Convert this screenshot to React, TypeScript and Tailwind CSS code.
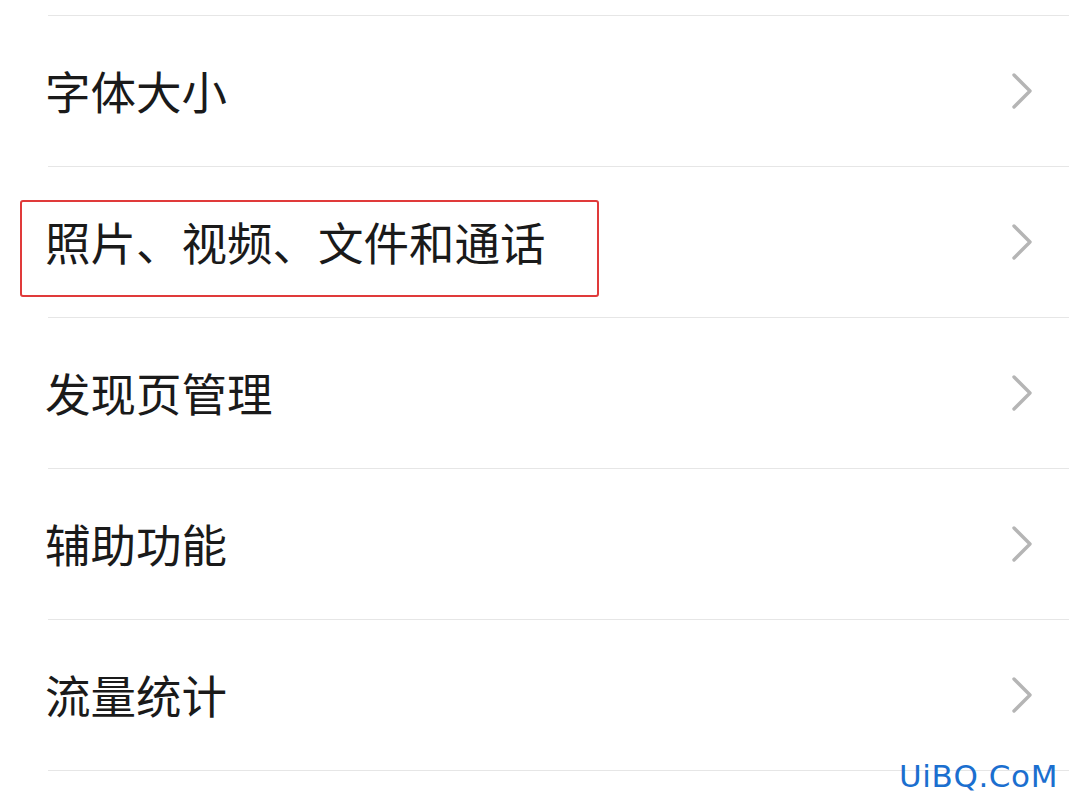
import React from 'react';

const items = ['字体大小', '照片、视频、文件和通话', '发现页管理', '辅助功能', '流量统计'];

const Chevron = () => (
  <svg width="20" height="36" viewBox="0 0 20 36" fill="none">
    <polyline points="2,2 18,18 2,34" stroke="#b5b5b5" strokeWidth="3.4" strokeLinecap="round" strokeLinejoin="round" />
  </svg>
);

export default function App() {
  return (
    <div
      className="relative w-[1069px] h-[801px] overflow-hidden bg-white"
      style={{ fontFamily: '"Noto Sans CJK SC", "Noto Sans", sans-serif' }}
    >
      <div className="ml-[48px] h-[16px] border-b border-[#e6e6e6]" />
      {items.map((label, i) => (
        <div key={label} className="relative">
          <div className="flex h-[150px] items-center justify-between pl-[45px] pr-[37px]">
            <span className="text-[45.5px] leading-none text-[#1a1a1a]">{label}</span>
            <Chevron />
          </div>
          <div className="ml-[48px] border-b border-[#e6e6e6]" />
          {i === 1 && (
            <div className="absolute left-[20px] top-[33px] h-[97px] w-[579px] rounded-[3px] border-2 border-[#e03a3a]" />
          )}
        </div>
      ))}
      <div
        className="absolute right-[11px] bottom-[9px] text-[31px] leading-none tracking-[0.6px] text-[#1b6fcf]"
        style={{ fontFamily: '"DejaVu Sans", Verdana, sans-serif' }}
      >
        UiBQ.CoM
      </div>
    </div>
  );
}
